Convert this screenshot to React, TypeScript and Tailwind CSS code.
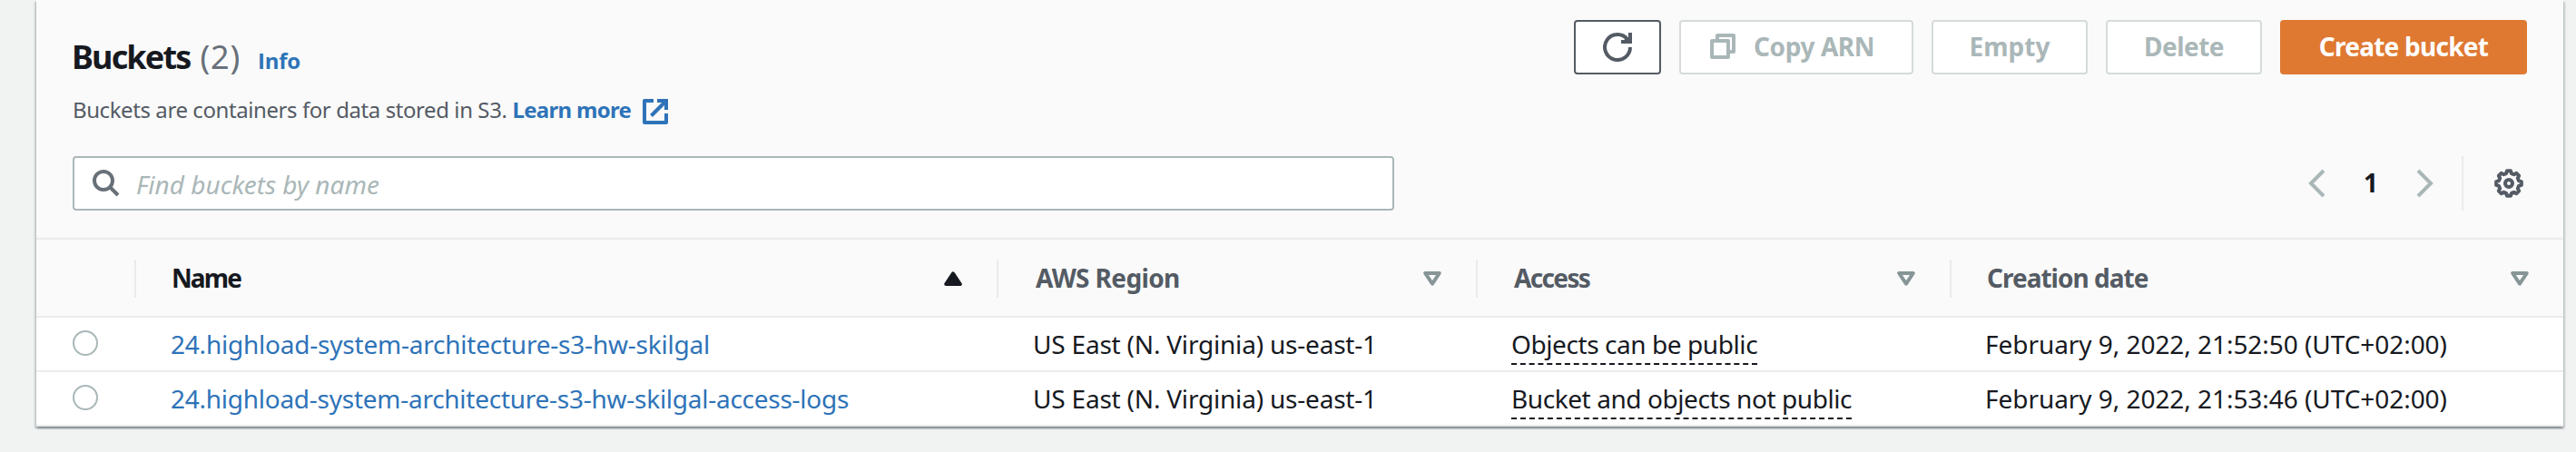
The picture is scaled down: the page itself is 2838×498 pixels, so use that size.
import type { ReactNode } from "react";

const GRID = "grid grid-cols-[110px_950px_528px_522px_674px]";

function RefreshIcon() {
  return (
    <svg width="32" height="32" viewBox="0 0 32 32" fill="none" stroke="#545b64" strokeWidth="4">
      <path d="M30 16A14 14 0 1 1 27.2 7.6" />
      <path d="M30 0V10H20" />
      <path d="M23 8l5-3v4z" fill="#545b64" stroke="none" />
    </svg>
  );
}

function CopyIcon() {
  return (
    <svg width="28" height="28" viewBox="0 0 28 28" fill="#ffffff" stroke="#aab7b8" strokeWidth="4" strokeLinejoin="round">
      <rect x="8" y="2" width="18" height="18" />
      <rect x="2" y="8" width="18" height="18" />
    </svg>
  );
}

function ExternalIcon() {
  return (
    <svg width="28" height="28" viewBox="0 0 28 28" fill="none" stroke="#2e73b8" strokeWidth="4" strokeLinejoin="round">
      <path d="M12 2H2v24h24V16" />
      <path d="M16 2h10v10" strokeLinejoin="miter" />
      <path d="M26 2L9.5 18.5" />
    </svg>
  );
}

function SearchIcon() {
  return (
    <svg width="30" height="30" viewBox="0 0 30 30" fill="none" stroke="#687078" strokeWidth="4">
      <circle cx="12" cy="12" r="10" />
      <path d="M19 19l9 9" />
    </svg>
  );
}

function Chevron({ right = false }: { right?: boolean }) {
  return (
    <svg width="20" height="32" viewBox="0 0 20 32" fill="none" stroke="#aab7b8" strokeWidth="4">
      <path d={right ? "M2 2l14 14L2 30" : "M18 2L4 16l14 14"} />
    </svg>
  );
}

function GearIcon() {
  const points: string[] = [];
  for (let i = 0; i < 8; i++) {
    const spokes: [number, number][] = [[-15, 11.3], [-8, 14], [8, 14], [15, 11.3]];
    for (const [offset, radius] of spokes) {
      const angle = ((i * 45 + offset) * Math.PI) / 180;
      points.push(`${(16 + radius * Math.cos(angle)).toFixed(2)},${(16 + radius * Math.sin(angle)).toFixed(2)}`);
    }
  }
  return (
    <svg width="32" height="32" viewBox="0 0 32 32" fill="none" stroke="#545b64" strokeWidth="4" strokeLinejoin="round">
      <polygon points={points.join(" ")} />
      <circle cx="16" cy="16" r="4" />
    </svg>
  );
}

function SortIcon({ active = false }: { active?: boolean }) {
  return (
    <svg width="20" height="16" viewBox="0 0 20 16" strokeWidth="4" strokeLinejoin="round" className="shrink-0">
      {active ? (
        <path d="M10 2.4L17.8 14H2.2z" fill="#16191f" stroke="#16191f" />
      ) : (
        <path d="M2.2 2h15.6L10 13.6z" fill="none" stroke="#879596" />
      )}
    </svg>
  );
}

function DisabledButton({ className, children }: { className: string; children: ReactNode }) {
  return (
    <button
      disabled
      className={`flex h-[60px] items-center rounded-[4px] border-2 border-[#d5dbdb] bg-white pb-[2px] text-[28px] leading-[40px] font-bold text-[#aab7b8] ${className}`}
    >
      {children}
    </button>
  );
}

function HeaderCell({ label, className, active = false, last = false }: { label: string; className: string; active?: boolean; last?: boolean }) {
  return (
    <div
      className={`flex h-[42px] items-center justify-between ${last ? "pr-[38px]" : "border-r-2 border-[#ebebeb] pr-[38px]"} ${active ? "text-[#16191f]" : "text-[#545b64]"}`}
    >
      <span className={`-mt-[2px] text-[28px] leading-[40px] font-bold ${className}`}>{label}</span>
      <SortIcon active={active} />
    </div>
  );
}

const rows = [
  {
    name: "24.highload-system-architecture-s3-hw-skilgal",
    nameClass: "tracking-[-0.22px]",
    access: "Objects can be public",
    accessClass: "tracking-[-0.42px]",
    date: "February 9, 2022, 21:52:50 (UTC+02:00)",
  },
  {
    name: "24.highload-system-architecture-s3-hw-skilgal-access-logs",
    nameClass: "tracking-[-0.26px]",
    access: "Bucket and objects not public",
    accessClass: "tracking-[-0.42px]",
    date: "February 9, 2022, 21:53:46 (UTC+02:00)",
  },
];

export default function App() {
  return (
    <div className="h-[498px] w-[2838px] overflow-hidden bg-[#f1f3f3] pl-[40px] font-['Noto_Sans',sans-serif] text-[#16191f]">
      <main className="h-[470px] w-[2784px] bg-white whitespace-nowrap shadow-[0_2px_2px_0_rgba(0,28,36,0.3),2px_2px_2px_0_rgba(0,28,36,0.15),-2px_2px_2px_0_rgba(0,28,36,0.15)]">
        <section className="h-[262px] bg-[#fafafa] px-[40px]">
          <div className="flex h-[172px] items-start justify-between">
            <div className="pt-[41px]">
              <div className="flex h-[44px] items-baseline leading-[44px]">
                <h1 className="-ml-px text-[36px] font-bold tracking-[-1.85px]">Buckets</h1>
                <span className="ml-[11px] text-[36px] tracking-[0.75px] text-[#687078]">(2)</span>
                <a className="ml-[19px] font-['Open_Sans',sans-serif] text-[24px] font-bold tracking-[-0.2px] text-[#2e73b8]">Info</a>
              </div>
              <div className="mt-[18px] flex h-[36px] items-center text-[24px] leading-[36px] text-[#545b64]">
                <p className="tracking-[-0.42px]">Buckets are containers for data stored in S3.</p>
                <a className="ml-[6px] font-bold tracking-[-0.69px] text-[#2e73b8]">Learn more</a>
                <span className="ml-[13px] pt-[3px]">
                  <ExternalIcon />
                </span>
              </div>
            </div>
            <div className="flex gap-[20px] pt-[22px]">
              <button className="flex h-[60px] w-[96px] items-center justify-center rounded-[4px] border-2 border-[#545b64] bg-white">
                <RefreshIcon />
              </button>
              <DisabledButton className="w-[258px] pl-[32px]">
                <CopyIcon />
                <span className="ml-[20px] tracking-[-0.4px]">Copy ARN</span>
              </DisabledButton>
              <DisabledButton className="w-[172px] justify-center">Empty</DisabledButton>
              <DisabledButton className="w-[172px] justify-center tracking-[-0.52px]">Delete</DisabledButton>
              <button className="flex h-[60px] w-[272px] items-center justify-center rounded-[4px] bg-[#df7932] pb-[2px] text-[28px] leading-[40px] font-bold tracking-[-0.74px] text-white">
                Create bucket
              </button>
            </div>
          </div>
          <div className="flex h-[60px] items-center justify-between">
            <div className="flex h-[60px] w-[1456px] items-center rounded-[4px] border-2 border-[#aab7b8] bg-white pl-[20px]">
              <SearchIcon />
              <span className="ml-[18px] pt-[2px] text-[28px] leading-[40px] text-[#aab7b8] italic">Find buckets by name</span>
            </div>
            <div className="flex h-[60px] items-center pr-[4px]">
              <Chevron />
              <span className="mt-[-2px] w-[100px] text-center text-[28px] leading-[40px] font-bold">1</span>
              <Chevron right />
              <span className="ml-[30px] h-[60px] w-[2px] bg-[#ebebeb]" />
              <span className="ml-[34px]">
                <GearIcon />
              </span>
            </div>
          </div>
        </section>

        <div className={`${GRID} h-[88px] items-center border-y-2 border-[#ebebeb] bg-[#fafafa] pt-[2px]`}>
          <div className="h-[42px] border-r-2 border-[#ebebeb]" />
          <HeaderCell label="Name" active className="pl-[39px] tracking-[-1.9px]" />
          <HeaderCell label="AWS Region" className="pl-[41px] tracking-[-0.62px]" />
          <HeaderCell label="Access" className="pl-[40px] tracking-[-1.65px]" />
          <HeaderCell label="Creation date" last className="pl-[39px] tracking-[-0.99px]" />
        </div>

        {rows.map((row) => (
          <div key={row.name} className={`${GRID} h-[60px] border-b-2 border-[#ebebeb] text-[28px] leading-[42px]`}>
            <div className="pt-[14px] pl-[40px]">
              <div className="size-[28px] rounded-full border-2 border-[#aab7b8] bg-white" />
            </div>
            <div className="pt-[8px] pl-[38px]">
              <a className={`text-[#2e73b8] ${row.nameClass}`}>{row.name}</a>
            </div>
            <div className="pt-[8px] pl-[38px] tracking-[-0.2px]">US East (N. Virginia) us-east-1</div>
            <div className="flex items-start pt-[8px] pl-[37px]">
              <span className={`h-[44px] border-b-2 border-dashed border-[#16191f] ${row.accessClass}`}>{row.access}</span>
            </div>
            <div className="pt-[8px] pl-[37px] tracking-[-0.05px]">{row.date}</div>
          </div>
        ))}
      </main>
    </div>
  );
}
